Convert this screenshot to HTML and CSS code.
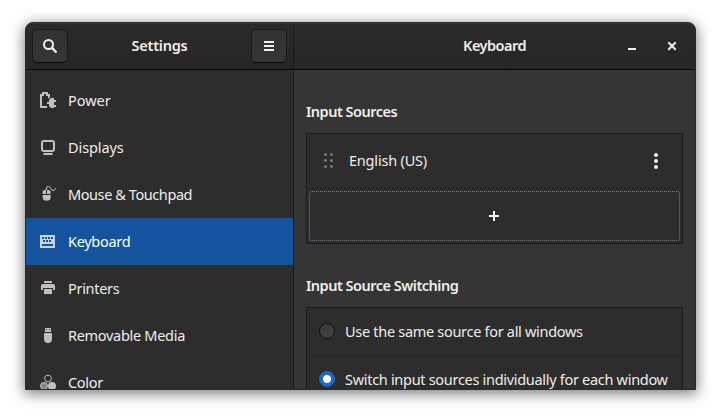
FILE: index.html
```html
<!DOCTYPE html>
<html lang="en">
<head>
<meta charset="utf-8">
<title>Settings</title>
<link rel="stylesheet" href="styles.css">
</head>
<body>
<div class="window">
  <header class="bar">
    <div class="bar-left">
      <button class="btn" aria-label="Search"><svg width="16" height="16" viewBox="0 0 16 16"><circle cx="6.5" cy="6.5" r="4.5" fill="none" stroke="currentColor" stroke-width="2"/><path d="M9.7 9.7L14.5 14.5" stroke="currentColor" stroke-width="2.4"/></svg></button>
      <h1 class="title t-settings">Settings</h1>
      <button class="btn" aria-label="Menu"><svg width="16" height="16" viewBox="0 0 16 16"><path d="M3 3h10v2H3zM3 7h10v2H3zM3 11h10v2H3z" fill="currentColor"/></svg></button>
    </div>
    <div class="bar-right">
      <h1 class="title t-keyboard">Keyboard</h1>
      <div class="controls">
        <svg width="16" height="16" viewBox="0 0 16 16"><path d="M4 10h8v2H4z" fill="currentColor"/></svg>
        <svg width="16" height="16" viewBox="0 0 16 16"><path d="M4.300 4.300l7.400 7.400M11.700 4.300l-7.400 7.400" stroke="currentColor" stroke-width="2"/></svg>
      </div>
    </div>
  </header>
  <div class="body">
    <nav class="sidebar">
      <a class="item"><svg width="16" height="16" viewBox="0 0 16 16"><path d="M0 2h2V0h6v2h2v3L8 7V4H6V2H4v2H2v10h5v2H0z" fill="currentColor"/><path d="M14 6v2h2v2h-2v3h2v2h-2v1h-3l-2-2v-2H7v-2h2V8l2-2z" fill="currentColor"/></svg><span class="n-power">Power</span></a>
      <a class="item"><svg width="16" height="16" viewBox="0 0 16 16"><rect x="2" y="2" width="12" height="10" rx="2" fill="none" stroke="currentColor" stroke-width="2"/><path d="M4 14h8l1 2H3z" fill="currentColor"/></svg><span class="n-displays">Displays</span></a>
      <a class="item"><svg width="16" height="16" viewBox="0 0 16 16"><path d="M2.700 8V6q0-2 3.300-2.200V8zM7 8V3.800q3.600.2 3.600 2.200v2zM2.700 9h7.900v2.500q0 3.300-3.900 3.300t-4-3.300z" fill="currentColor"/><path d="M6.500 4V2q0-1.500 2-1.500 1.500 0 2.300 2t2.200 2q2 0 2.500-2.500" fill="none" stroke="currentColor" stroke-width="1"/></svg><span class="n-mouse">Mouse &amp; Touchpad</span></a>
      <a class="item selected"><svg width="16" height="16" viewBox="0 0 16 16"><path fill-rule="evenodd" d="M0 2h15v13H0zM2 4v2h2V4zM5 4v2h2V4zM8 4v2h2V4zM11 4v2h2V4zM3 7v2h2V7zM6 7v2h2V7zM9 7v2h2V7zM2 11v2h11v-2z" fill="currentColor"/></svg><span class="n-keyboard">Keyboard</span></a>
      <a class="item"><svg width="16" height="16" viewBox="0 0 16 16"><path d="M4 1h8v2H4zM3 4h10q2 0 2 2v4h-2V8H3v2H1V6q0-2 2-2zM4 9h8v5H4z" fill="currentColor"/></svg><span class="n-printers">Printers</span></a>
      <a class="item"><svg width="16" height="16" viewBox="0 0 16 16"><path fill-rule="evenodd" d="M5 1h6v4H5zM6 2v1h1V2zM9 2v1h1V2zM4 6h8v6q0 4-4 4t-4-4z" fill="currentColor"/></svg><span class="n-media">Removable Media</span></a>
      <a class="item"><svg width="16" height="16" viewBox="0 0 16 16"><circle cx="8" cy="4.500" r="3.400" fill="none" stroke="currentColor"/><circle cx="4" cy="12" r="3.500" fill="#868686" stroke="currentColor"/><circle cx="12" cy="12" r="4" fill="currentColor"/></svg><span class="n-color">Color</span></a>
    </nav>
    <main class="panel">
      <h2 class="h-sources">Input Sources</h2>
      <section class="list sources">
        <div class="row source">
          <svg width="16" height="18" viewBox="0 0 16 18" class="grip"><g fill="currentColor"><circle cx="4.500" cy="2.500" r="1.600"/><circle cx="10.500" cy="2.500" r="1.600"/><circle cx="4.500" cy="8.500" r="1.600"/><circle cx="10.500" cy="8.500" r="1.600"/><circle cx="4.500" cy="14.500" r="1.600"/><circle cx="10.500" cy="14.500" r="1.600"/></g></svg>
          <span class="n-english">English (US)</span>
          <svg width="16" height="16" viewBox="0 0 16 16" class="more"><g fill="currentColor"><circle cx="8" cy="2" r="2"/><circle cx="8" cy="8" r="2"/><circle cx="8" cy="14" r="2"/></g></svg>
        </div>
        <div class="row add"><div class="focus"><svg width="16" height="16" viewBox="0 0 16 16"><path d="M7 3h2v4h4v2H9v4H7V9H3V7h4z" fill="#fff"/></svg></div></div>
      </section>
      <h2 class="h-switching">Input Source Switching</h2>
      <section class="list">
        <label class="row choice"><i class="radio"></i><span class="n-same">Use the same source for all windows</span></label>
        <label class="row choice"><i class="radio on"></i><span class="n-each">Switch input sources individually for each window</span></label>
      </section>
    </main>
  </div>
</div>
</body>
</html>
```
FILE: styles.css
```css
* { box-sizing: border-box; }
body { margin: 0; height: 418px; padding: 22px 25px 28px; overflow: hidden; background: #fff; color: #eeeeec; font: 14.5px/20px "Noto Sans", sans-serif; letter-spacing: -.3px; }
svg { display: block; flex: none; }
span, h1, h2 { white-space: nowrap; }
h1, h2 { margin: 0; font-size: 14.5px; font-weight: 600; line-height: 20px; letter-spacing: -.5px; }
.window { width: 671px; height: 368px; display: flex; flex-direction: column; border: 1px solid #292929; border-radius: 8px 8px 0 0; background: #353535; overflow: hidden; box-shadow: 0 3px 14px 1px rgba(0,0,0,.5); }
.bar { flex: none; height: 47px; display: flex; border-bottom: 1px solid #070707; background: linear-gradient(#2b2b2b, #262626); box-shadow: inset 0 1px #383838; }
.bar-left { width: 268px; padding: 0 6px; border-right: 1px solid #1b1b1b; display: flex; align-items: center; justify-content: space-between; }
.title { padding-bottom: 2px; }
.t-settings { letter-spacing: -.25px; }
.btn { width: 36px; height: 34px; padding: 0; display: grid; place-items: center; color: #eeeeec; border: 1px solid #1b1b1b; border-bottom-color: #070707; border-radius: 5px; background: linear-gradient(#323232, #353535); }
.bar-right { flex: 1; display: grid; grid-template-columns: 169px 1fr auto; align-items: center; }
.bar-right .title { grid-column: 2; }
.controls { display: flex; gap: 24px; padding-right: 15px; }
.body { flex: 1; min-height: 0; display: flex; }
.sidebar { width: 268px; padding-top: 7px; border-right: 1px solid #1b1b1b; background: #2d2d2d; overflow: hidden; }
.item { height: 47px; display: flex; align-items: center; gap: 12px; padding: 0 0 1px 14px; }
.item svg { color: #c0c0bf; }
.item.selected { background: #15539e; color: #fff; }
.item.selected svg { color: #c5d4e7; }
.n-power { letter-spacing: -.05px; }
.n-displays { letter-spacing: -.1px; }
.n-mouse { letter-spacing: -.42px; }
.panel { flex: 1; min-width: 0; padding: 31px 12px 0; overflow: hidden; }
.list { margin-top: 12px; border: 1px solid #1b1b1b; background: #2d2d2d; }
.row { display: flex; align-items: center; }
.row + .row { border-top: 1px solid #282828; }
.source { height: 54px; padding: 0 18px 0 14px; }
.grip { color: #747474; }
.source span { margin-left: 12px; padding-bottom: 2px; letter-spacing: -.2px; }
.more { margin-left: auto; color: #eeeeec; }
.add { padding: 2px; }
.focus { flex: 1; height: 50px; display: grid; place-items: center; padding-right: 1px; border: 1px dotted #808080; border-radius: 3px; }
.sources + h2 { margin-top: 31px; }
.choice { height: 47px; padding: 0 0 1px 12px; gap: 10px; }
.choice + .choice { height: 48px; }
.radio { flex: none; width: 16px; height: 16px; border-radius: 50%; border: 1px solid #101010; background: linear-gradient(#3b3b3b, #424242); }
.radio.on { border-color: #1a66c9; background: radial-gradient(circle, #fff 3.500px, #1b6acb 4.500px); }
```
